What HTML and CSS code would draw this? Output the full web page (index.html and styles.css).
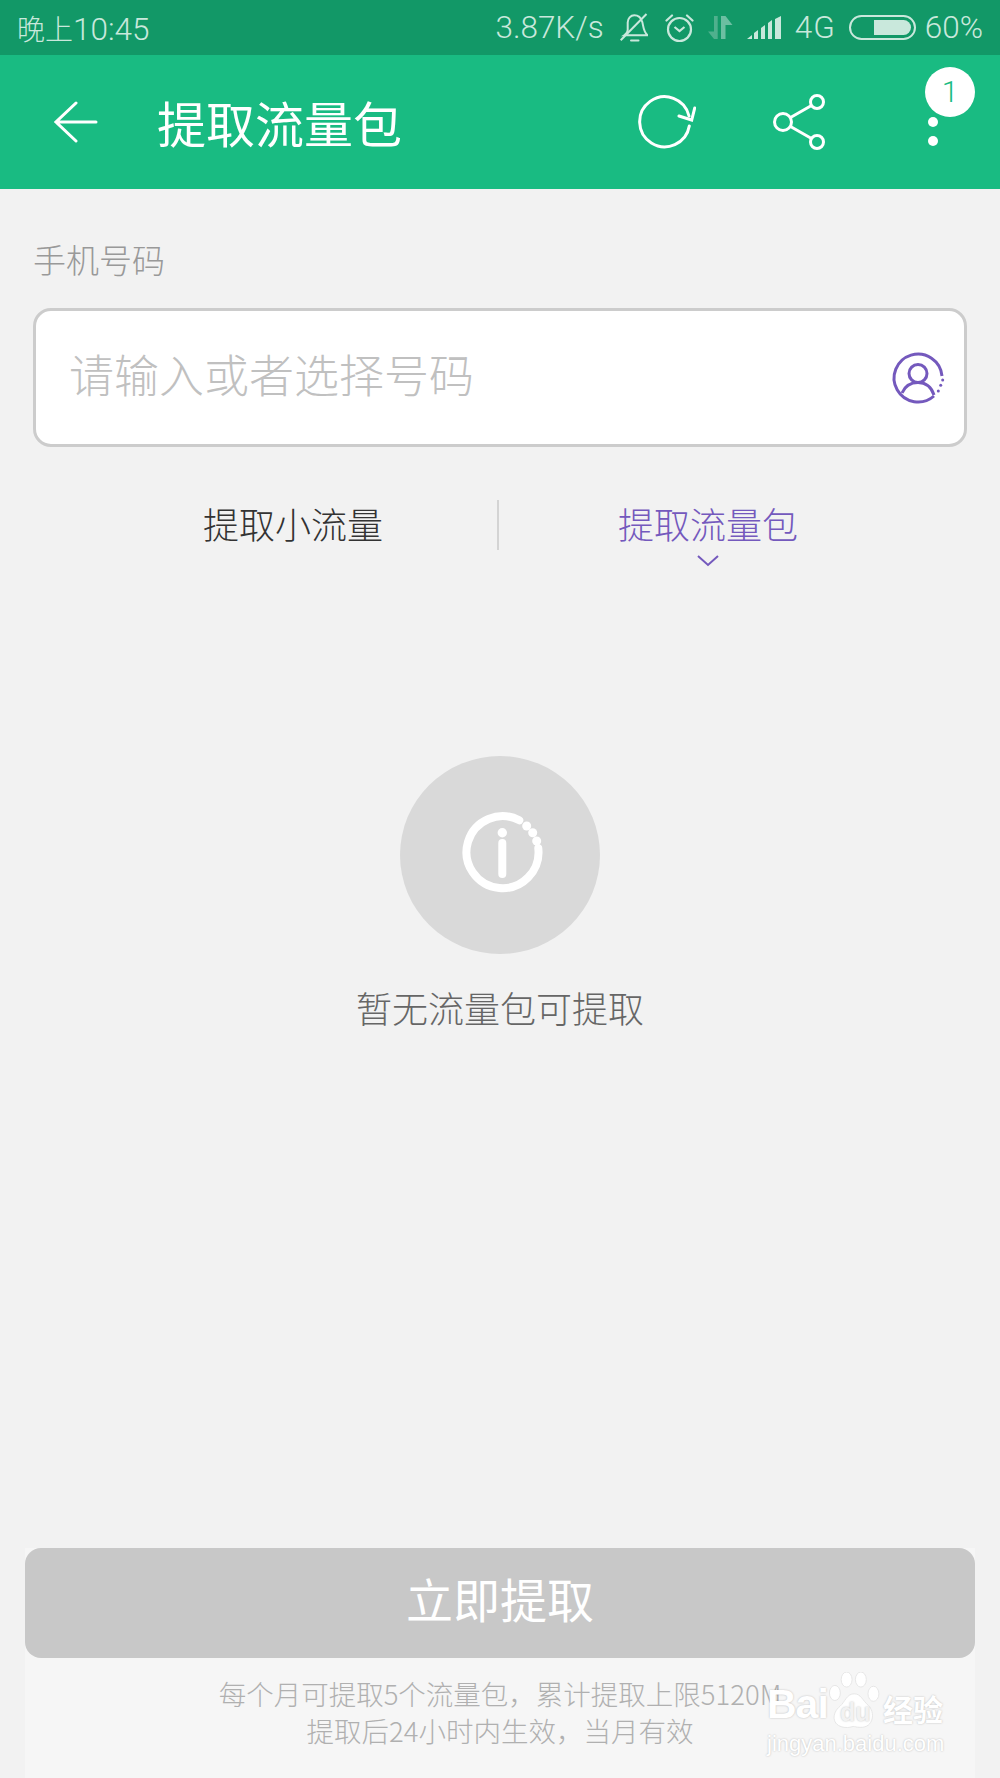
FILE: index.html
```html
<!DOCTYPE html>
<html lang="zh-CN">
<head>
  <meta charset="UTF-8">
  <meta name="viewport" content="width=device-width, initial-scale=1.0">
  <title>提取流量包</title>
  <link rel="stylesheet" href="styles.css">
</head>
<body>
  <div class="page">
    <div class="status">
      <span class="status-time"><span class="status-cn">晚上</span>10:45</span>
      <div class="status-right">
        <span>3.87K/s</span>
        <!-- 静音铃铛 -->
        <svg class="ic-bell" width="28" height="30" viewBox="0 0 28 30" fill="none" stroke="#c9e8dc" stroke-width="2">
          <path d="M4.300 22.300c3-2 3.400-3.300 3.400-5.300V9.500c0-4 3-7.200 6.600-7.200s6.800 2.700 8 6.700c1 3.500 1 10 5.400 13.300H4.300z"/>
          <path d="M.7 27.300L26.500 1"/>
          <path d="M11 27.500h7.500" stroke-linecap="round"/>
        </svg>
        <!-- 闹钟 -->
        <svg class="ic-alarm" width="30" height="30" viewBox="0 0 30 30" fill="none" stroke="#c9e8dc" stroke-width="2.200">
          <circle cx="14.500" cy="16.500" r="11.500"/>
          <path d="M9.500 14l5 4 5-4"/>
          <path d="M1.500 7.500L7 2.500M27.500 7.500L22 2.500" stroke-linecap="round"/>
        </svg>
        <!-- 上下行箭头 -->
        <svg class="ic-arrows" width="25" height="25" viewBox="0 0 25 25">
          <path d="M6 1h3.700v23H6L0 16.500h6z" fill="#4fb08d"/>
          <path d="M13 1h4.500L24.500 10H17.500v14H13z" fill="#6cbfa2"/>
        </svg>
        <!-- 信号 -->
        <svg class="ic-signal" width="35" height="24" viewBox="0 0 35 24" fill="#c9e8dc">
          <path d="M0 23l5-4v4zM7 17l4-3v9H7zM14 12l4-3v14h-4zM21 7l4-3v19h-4zM28 3l6-3v23h-6z"/>
        </svg>
        <span class="status-net">4G</span>
        <span class="battery"><span class="battery-fill"></span></span>
        <span>60%</span>
      </div>
    </div>

    <div class="header">
      <svg class="back" width="44" height="42" viewBox="0 0 44 42" fill="none" stroke="#fff" stroke-width="3" stroke-linecap="round">
        <path d="M22 2L2 21l20 19M2 21h40"/>
      </svg>
      <h1 class="title">提取流量包</h1>
      <div class="header-icons">
        <svg class="ic-refresh" width="62" height="60" viewBox="0 0 62 60" fill="none" stroke="#fff" stroke-width="3" stroke-linecap="round">
          <path d="M55.300 34A25 25 0 1 1 55 24"/>
          <path d="M45 24l12.700 4L60.700 16"/>
        </svg>
        <svg class="ic-share" width="58" height="58" viewBox="0 0 58 58" fill="none" stroke="#fff" stroke-width="3">
          <circle cx="13" cy="29" r="8.500"/>
          <circle cx="47" cy="9" r="6.500"/>
          <circle cx="47" cy="49" r="6.500"/>
          <path d="M20.500 24.500L41.500 12.500M20.500 33.500L41.500 45.500"/>
        </svg>
        <div class="more">
          <i></i>
          <i></i>
          <span class="badge">1</span>
        </div>
      </div>
    </div>

    <div class="content">
      <div class="label">手机号码</div>
      <div class="phone">
        <span class="placeholder">请输入或者选择号码</span>
        <svg class="ic-contact" width="60" height="60" viewBox="0 0 60 60" fill="none" stroke="#7459bd" stroke-width="3">
          <path d="M54 28A24 24 0 1 0 46 48"/>
          <circle cx="30" cy="25.500" r="9"/>
          <path d="M14 45c3-7 9-10.500 16-10.500S43 38 46 47"/>
          <circle cx="54.700" cy="32" r="1.500" fill="#7459bd" stroke="none"/>
          <circle cx="52.700" cy="37.300" r="1.500" fill="#7459bd" stroke="none"/>
          <circle cx="50.300" cy="43" r="1.500" fill="#7459bd" stroke="none"/>
        </svg>
      </div>

      <div class="tabs">
        <div class="tab">提取小流量</div>
        <div class="tab-line"></div>
        <div class="tab tab-on">
          提取流量包
          <svg class="tab-arrow" width="22" height="12" viewBox="0 0 22 12" fill="none" stroke="#7459bd" stroke-width="2">
            <path d="M1 1l10 9 10-9"/>
          </svg>
        </div>
      </div>

      <div class="empty">
        <svg class="empty-pic" width="200" height="198" viewBox="0 0 200 198">
          <ellipse cx="100" cy="99" rx="100" ry="99" fill="#d9d9d9"/>
          <path d="M119.300 64.300A36 36 0 1 0 138.300 92.300" fill="none" stroke="#fff" stroke-width="8" stroke-linecap="round"/>
          <circle cx="126.700" cy="70" r="4.500" fill="#fff"/>
          <circle cx="132.700" cy="76.700" r="4.500" fill="#fff"/>
          <circle cx="136.700" cy="85" r="4.500" fill="#fff"/>
          <circle cx="102.300" cy="76.700" r="4.700" fill="#fff"/>
          <path d="M102.300 87v31" stroke="#fff" stroke-width="8" stroke-linecap="round"/>
        </svg>
        <div class="empty-text">暂无流量包可提取</div>
      </div>
    </div>

    <div class="bottom">
      <div class="submit">立即提取</div>
      <div class="notes">
        <p>每个月可提取5个流量包，累计提取上限5120M</p>
        <p>提取后24小时内生效，当月有效</p>
      </div>
    </div>

    <!-- 水印 -->
    <div class="mark">
      <div class="mark-row">
        <span class="mark-bai">Bai</span>
        <span class="mark-paw">
          <svg width="54" height="57" viewBox="0 0 62 68" fill="#fff" stroke="#e2e2e2" stroke-width="1">
            <ellipse cx="7" cy="25" rx="6.500" ry="9"/>
            <ellipse cx="21" cy="9" rx="6.500" ry="9"/>
            <ellipse cx="38" cy="9" rx="6.500" ry="9"/>
            <ellipse cx="53" cy="26" rx="6.500" ry="9"/>
            <path d="M30 26c8 0 10 8 17 14 8 7 7 27-10 26-4 0-6-1-8-1s-5 2-11 1C3 64 3 49 13 41c6-5 8-15 17-15z"/>
          </svg>
          <span class="mark-du">du</span>
        </span>
        <span class="mark-cn">经验</span>
      </div>
      <div class="mark-url">jingyan.baidu.com</div>
    </div>
  </div>
</body>
</html>
```

FILE: styles.css
```css
* {
  padding: 0;
  margin: 0;
  box-sizing: border-box;
}
body {
  font-family: "Noto Sans CJK SC", "Liberation Sans", sans-serif;
  font-weight: 300;
  background-color: #f2f2f2;
}
.page {
  width: 1000px;
  height: 1778px;
  position: relative;
  overflow: hidden;
  display: flex;
  flex-direction: column;
}
svg {
  display: block;
  flex-shrink: 0;
}

/* 状态栏 */
.status {
  height: 55px;
  padding: 0 17px;
  background-color: #129867;
  color: #c9e8dc;
  font-family: Roboto, "Noto Sans CJK SC", sans-serif;
  font-size: 31.5px;
  display: flex;
  align-items: center;
  justify-content: space-between;
}
.status-cn {
  font-size: 28px;
}
.status-right {
  display: flex;
  align-items: center;
}
.ic-bell {
  margin-left: 16px;
}
.ic-alarm {
  margin-left: 17px;
}
.ic-arrows {
  margin-left: 13px;
}
.ic-signal {
  margin-left: 14px;
}
.status-net {
  margin-left: 13px;
  margin-right: 13px;
  letter-spacing: 1px;
}
.battery {
  width: 67px;
  height: 25px;
  margin-right: 9px;
  padding: 3px;
  border: 2px solid #c9e8dc;
  border-radius: 13px;
  display: flex;
  justify-content: flex-end;
}
.battery-fill {
  width: 37px;
  background-color: #c9e8dc;
  border-radius: 0 9px 9px 0;
}

/* 标题栏 */
.header {
  height: 134px;
  padding-left: 54px;
  background-color: #19bb82;
  display: flex;
  align-items: center;
}
.title {
  margin-left: 59px;
  color: #fff;
  font-size: 49px;
  font-weight: 400;
  line-height: 60px;
}
.header-icons {
  margin-left: auto;
  display: flex;
  align-items: center;
}
.ic-share {
  margin-left: 74px;
}
.more {
  width: 10px;
  margin-left: 100px;
  margin-right: 62px;
  padding-top: 19px;
  display: flex;
  flex-direction: column;
  gap: 9px;
  position: relative;
}
.more i {
  width: 10px;
  height: 10px;
  background-color: #fff;
  border-radius: 50%;
}
.badge {
  width: 50px;
  height: 50px;
  position: absolute;
  left: -3px;
  top: -31px;
  background-color: #fff;
  border-radius: 50%;
  color: #19bb82;
  font-family: Roboto, sans-serif;
  font-size: 30px;
  font-weight: 300;
  line-height: 50px;
  text-align: center;
}

/* 内容 */
.content {
  flex: 1;
  padding: 0 33px;
}
.label {
  margin-top: 49px;
  color: #999;
  font-size: 33px;
  line-height: 42px;
}
.phone {
  height: 139px;
  margin-top: 28px;
  padding: 0 16px 0 33px;
  background-color: #fff;
  border: 3px solid #ccc;
  border-radius: 18px;
  display: flex;
  align-items: center;
  justify-content: space-between;
}
.placeholder {
  padding-bottom: 9px;
  color: #c0c0c0;
  font-size: 45px;
}
.tabs {
  height: 50px;
  margin-top: 53px;
  padding-right: 4px;
  display: flex;
  justify-content: center;
  align-items: center;
}
.tab {
  width: 410px;
  height: 50px;
  padding-left: 2px;
  color: #333;
  font-size: 36px;
  line-height: 46px;
  text-align: center;
  position: relative;
}
.tab-on {
  padding-left: 8px;
  color: #7459bd;
}
.tab-arrow {
  position: absolute;
  left: 198px;
  top: 55px;
}
.tab-line {
  width: 2px;
  height: 50px;
  background-color: #d4d4d4;
}
.empty {
  margin-top: 206px;
  display: flex;
  flex-direction: column;
  align-items: center;
}
.empty-text {
  margin-top: 27px;
  color: #666;
  font-size: 36px;
  line-height: 52px;
}

/* 底部 */
.bottom {
  width: 950px;
  height: 230px;
  margin: 0 auto;
  background-color: #f6f6f6;
}
.submit {
  height: 110px;
  background-color: #c8c8c8;
  border-radius: 16px;
  color: #fff;
  font-size: 47px;
  font-weight: 400;
  line-height: 100px;
  text-align: center;
}
.notes {
  padding-top: 17px;
  color: #b0b0b0;
  font-size: 27.5px;
  line-height: 37px;
  text-align: center;
}

/* 水印 */
.mark {
  position: absolute;
  left: 767px;
  top: 1672px;
  width: 190px;
  color: #fff;
  font-weight: 700;
  text-shadow: 0 0 2px rgba(0, 0, 0, .25);
  white-space: nowrap;
}
.mark-row {
  height: 57px;
  display: flex;
  align-items: flex-end;
}
.mark-bai {
  width: 61px;
  font-family: "Liberation Sans", sans-serif;
  font-size: 41px;
  letter-spacing: -1px;
  line-height: 50px;
}
.mark-paw {
  width: 55px;
  height: 57px;
  position: relative;
}
.mark-du {
  position: absolute;
  left: 12px;
  top: 26px;
  color: #f2f2f2;
  font-family: "Liberation Sans", sans-serif;
  font-size: 25px;
  line-height: 28px;
}
.mark-cn {
  font-size: 30px;
  line-height: 42px;
}
.mark-url {
  font-family: "Liberation Sans", sans-serif;
  font-size: 22px;
  font-weight: 400;
  line-height: 30px;
}
```
